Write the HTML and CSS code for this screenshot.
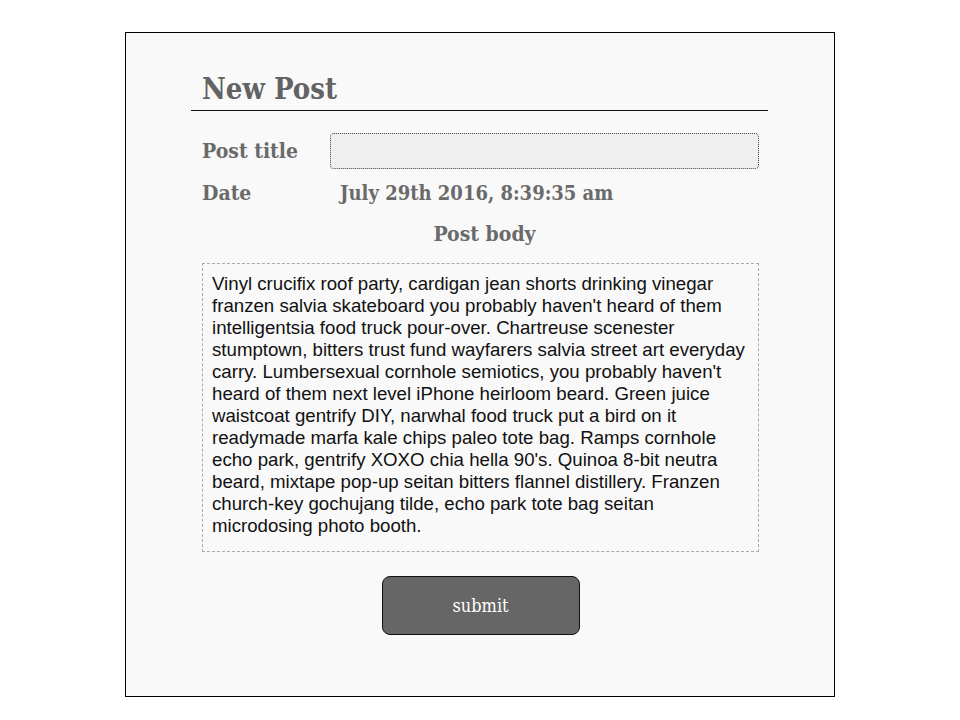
FILE: index.html
```html
<!DOCTYPE html>
<html>
<head>
<meta charset="utf-8">
<link rel="stylesheet" href="styles.css">
</head>
<body>
<div class="card">
  <div class="form">
    <h1 class="title">New Post</h1>
    <div class="row row-title">
      <label class="label">Post title</label>
      <div class="input"></div>
    </div>
    <div class="row row-date">
      <span class="label">Date</span>
      <span class="date">July 29th 2016, 8:39:35 am</span>
    </div>
    <div class="body-label">Post body</div>
    <div class="textarea">Vinyl crucifix roof party, cardigan jean shorts drinking vinegar franzen salvia skateboard you probably haven't heard of them intelligentsia food truck pour-over. Chartreuse scenester stumptown, bitters trust fund wayfarers salvia street art everyday carry. Lumbersexual cornhole semiotics, you probably haven't heard of them next level iPhone heirloom beard. Green juice waistcoat gentrify DIY, narwhal food truck put a bird on it readymade marfa kale chips paleo tote bag. Ramps cornhole echo park, gentrify XOXO chia hella 90's. Quinoa 8-bit neutra beard, mixtape pop-up seitan bitters flannel distillery. Franzen church-key gochujang tilde, echo park tote bag seitan microdosing photo booth.</div>
    <div class="actions"><button class="submit">submit</button></div>
  </div>
</div>
</body>
</html>
```
FILE: styles.css
```css
html, body { margin: 0; padding: 0; background: #fff; }
body { font-family: "DejaVu Serif Condensed", "DejaVu Serif", serif; color: #666; }
.card {
  width: 708px;
  height: 663px;
  margin: 32px auto 0;
  border: 1px solid #000;
  background: #f9f9f9;
}
.form {
  width: 557px;
  margin-left: 76px;
  padding-top: 40px;
}
.title {
  margin: 0 0 0 -11px;
  width: 566px;
  padding: 0 0 4px 11px;
  border-bottom: 1px solid #111;
  font-size: 29px;
  line-height: 33px;
  font-weight: bold;
  color: #636363;
}
.row { display: flex; align-items: center; }
.row-title { margin-top: 21px; height: 37px; }
.label { width: 128px; font-size: 21px; font-weight: bold; color: #6a6a6a; }
.input {
  flex: 1;
  height: 34px;
  border: 1px dotted #444;
  border-radius: 4px;
  background: #efefef;
}
.row-date { margin-top: 11px; height: 32px; align-items: flex-start; }
.date { margin-left: 10px; margin-top: 1px; font-size: 20px; font-weight: bold; color: #6a6a6a; }
.body-label {
  text-align: center;
  font-size: 21px;
  font-weight: bold;
  color: #6a6a6a;
  margin-top: 9px;
  padding-left: 8px;
  height: 30px;
}
.textarea {
  margin-top: 12px;
  box-sizing: border-box;
  height: 289px;
  border: 1px dashed #aaa;
  padding: 9px 9px;
  font-family: "Liberation Sans", Arial, sans-serif;
  font-size: 18.67px;
  line-height: 22px;
  color: #111;
}
.actions { display: flex; justify-content: center; margin-top: 24px; }
.submit {
  width: 198px;
  height: 59px;
  background: #666;
  border: 1px solid #111;
  border-radius: 8px;
  color: #fff;
  font-family: "DejaVu Serif Condensed", "DejaVu Serif", serif;
  font-size: 18px;
  font-weight: normal;
}
```
